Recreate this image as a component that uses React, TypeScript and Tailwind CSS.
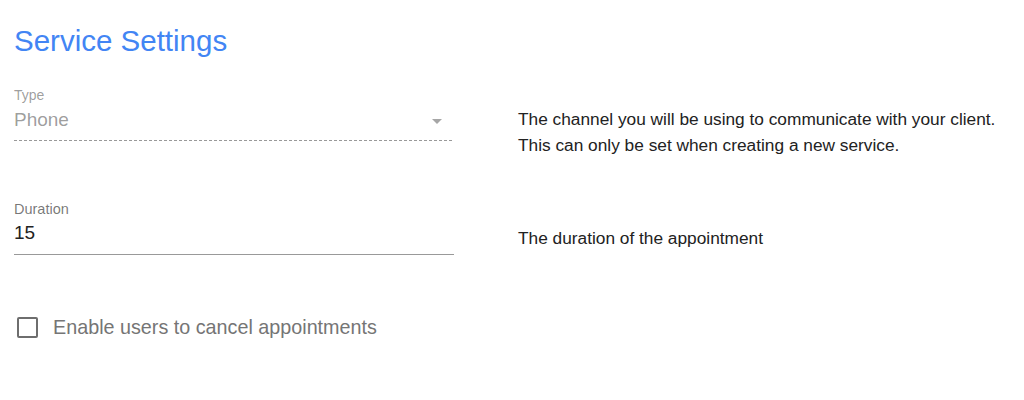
import { useState } from "react";

export default function App() {
  const [canCancel, setCanCancel] = useState(false);

  return (
    <div className="w-[1024px] h-[400px] bg-white font-['Liberation_Sans',Arial,sans-serif] pl-[14px] pt-[23px]">
      <h1 className="text-[29.5px] leading-[35px] text-[#4285f4] font-normal">Service Settings</h1>

      {/* Type */}
      <div className="flex mt-[29px]">
        <div className="w-[440px]">
          <label className="block text-[14px] leading-[16px] text-black/40">Type</label>
          <div className="relative mt-[5px] pb-[8px]">
            <div className="text-[19px] leading-[24px] text-black/40">Phone</div>
            <span className="absolute right-[12px] top-[11px] w-0 h-0 border-l-[5px] border-r-[5px] border-t-[5px] border-l-transparent border-r-transparent border-t-black/35" />
          </div>
          <div className="h-px bg-[linear-gradient(to_right,rgba(0,0,0,0.4)_0%,rgba(0,0,0,0.4)_60%,transparent_60%)] bg-size-[5px_1px] bg-repeat-x" />
        </div>
        <p className="ml-[64px] mt-[19px] text-[17.3px] leading-[26px] text-[#222]">
          The channel you will be using to communicate with your client.
          <br />
          This can only be set when creating a new service.
        </p>
      </div>

      {/* Duration */}
      <div className="flex mt-[43px]">
        <div className="w-[440px]">
          <label className="block text-[14.5px] leading-[16px] text-black/55">Duration</label>
          <input
            defaultValue="15"
            className="block w-full mt-[4px] pb-[9px] text-[19px] leading-[24px] text-[#222] outline-none border-b border-black/40 bg-transparent"
          />
        </div>
        <p className="ml-[64px] mt-[24px] text-[17.3px] leading-[26px] text-[#222]">The duration of the appointment</p>
      </div>

      {/* Checkbox */}
      <label className="flex items-center mt-[60px] ml-[3px] cursor-pointer">
        <input
          type="checkbox"
          checked={canCancel}
          onChange={e => setCanCancel(e.target.checked)}
          className="appearance-none w-[21px] h-[21px] border-2 border-[#6e6e6e] rounded-[2px] checked:bg-[#4285f4] checked:border-[#4285f4]"
        />
        <span className="ml-[15px] text-[19.75px] leading-[24px] text-[#757575]">Enable users to cancel appointments</span>
      </label>
    </div>
  );
}
